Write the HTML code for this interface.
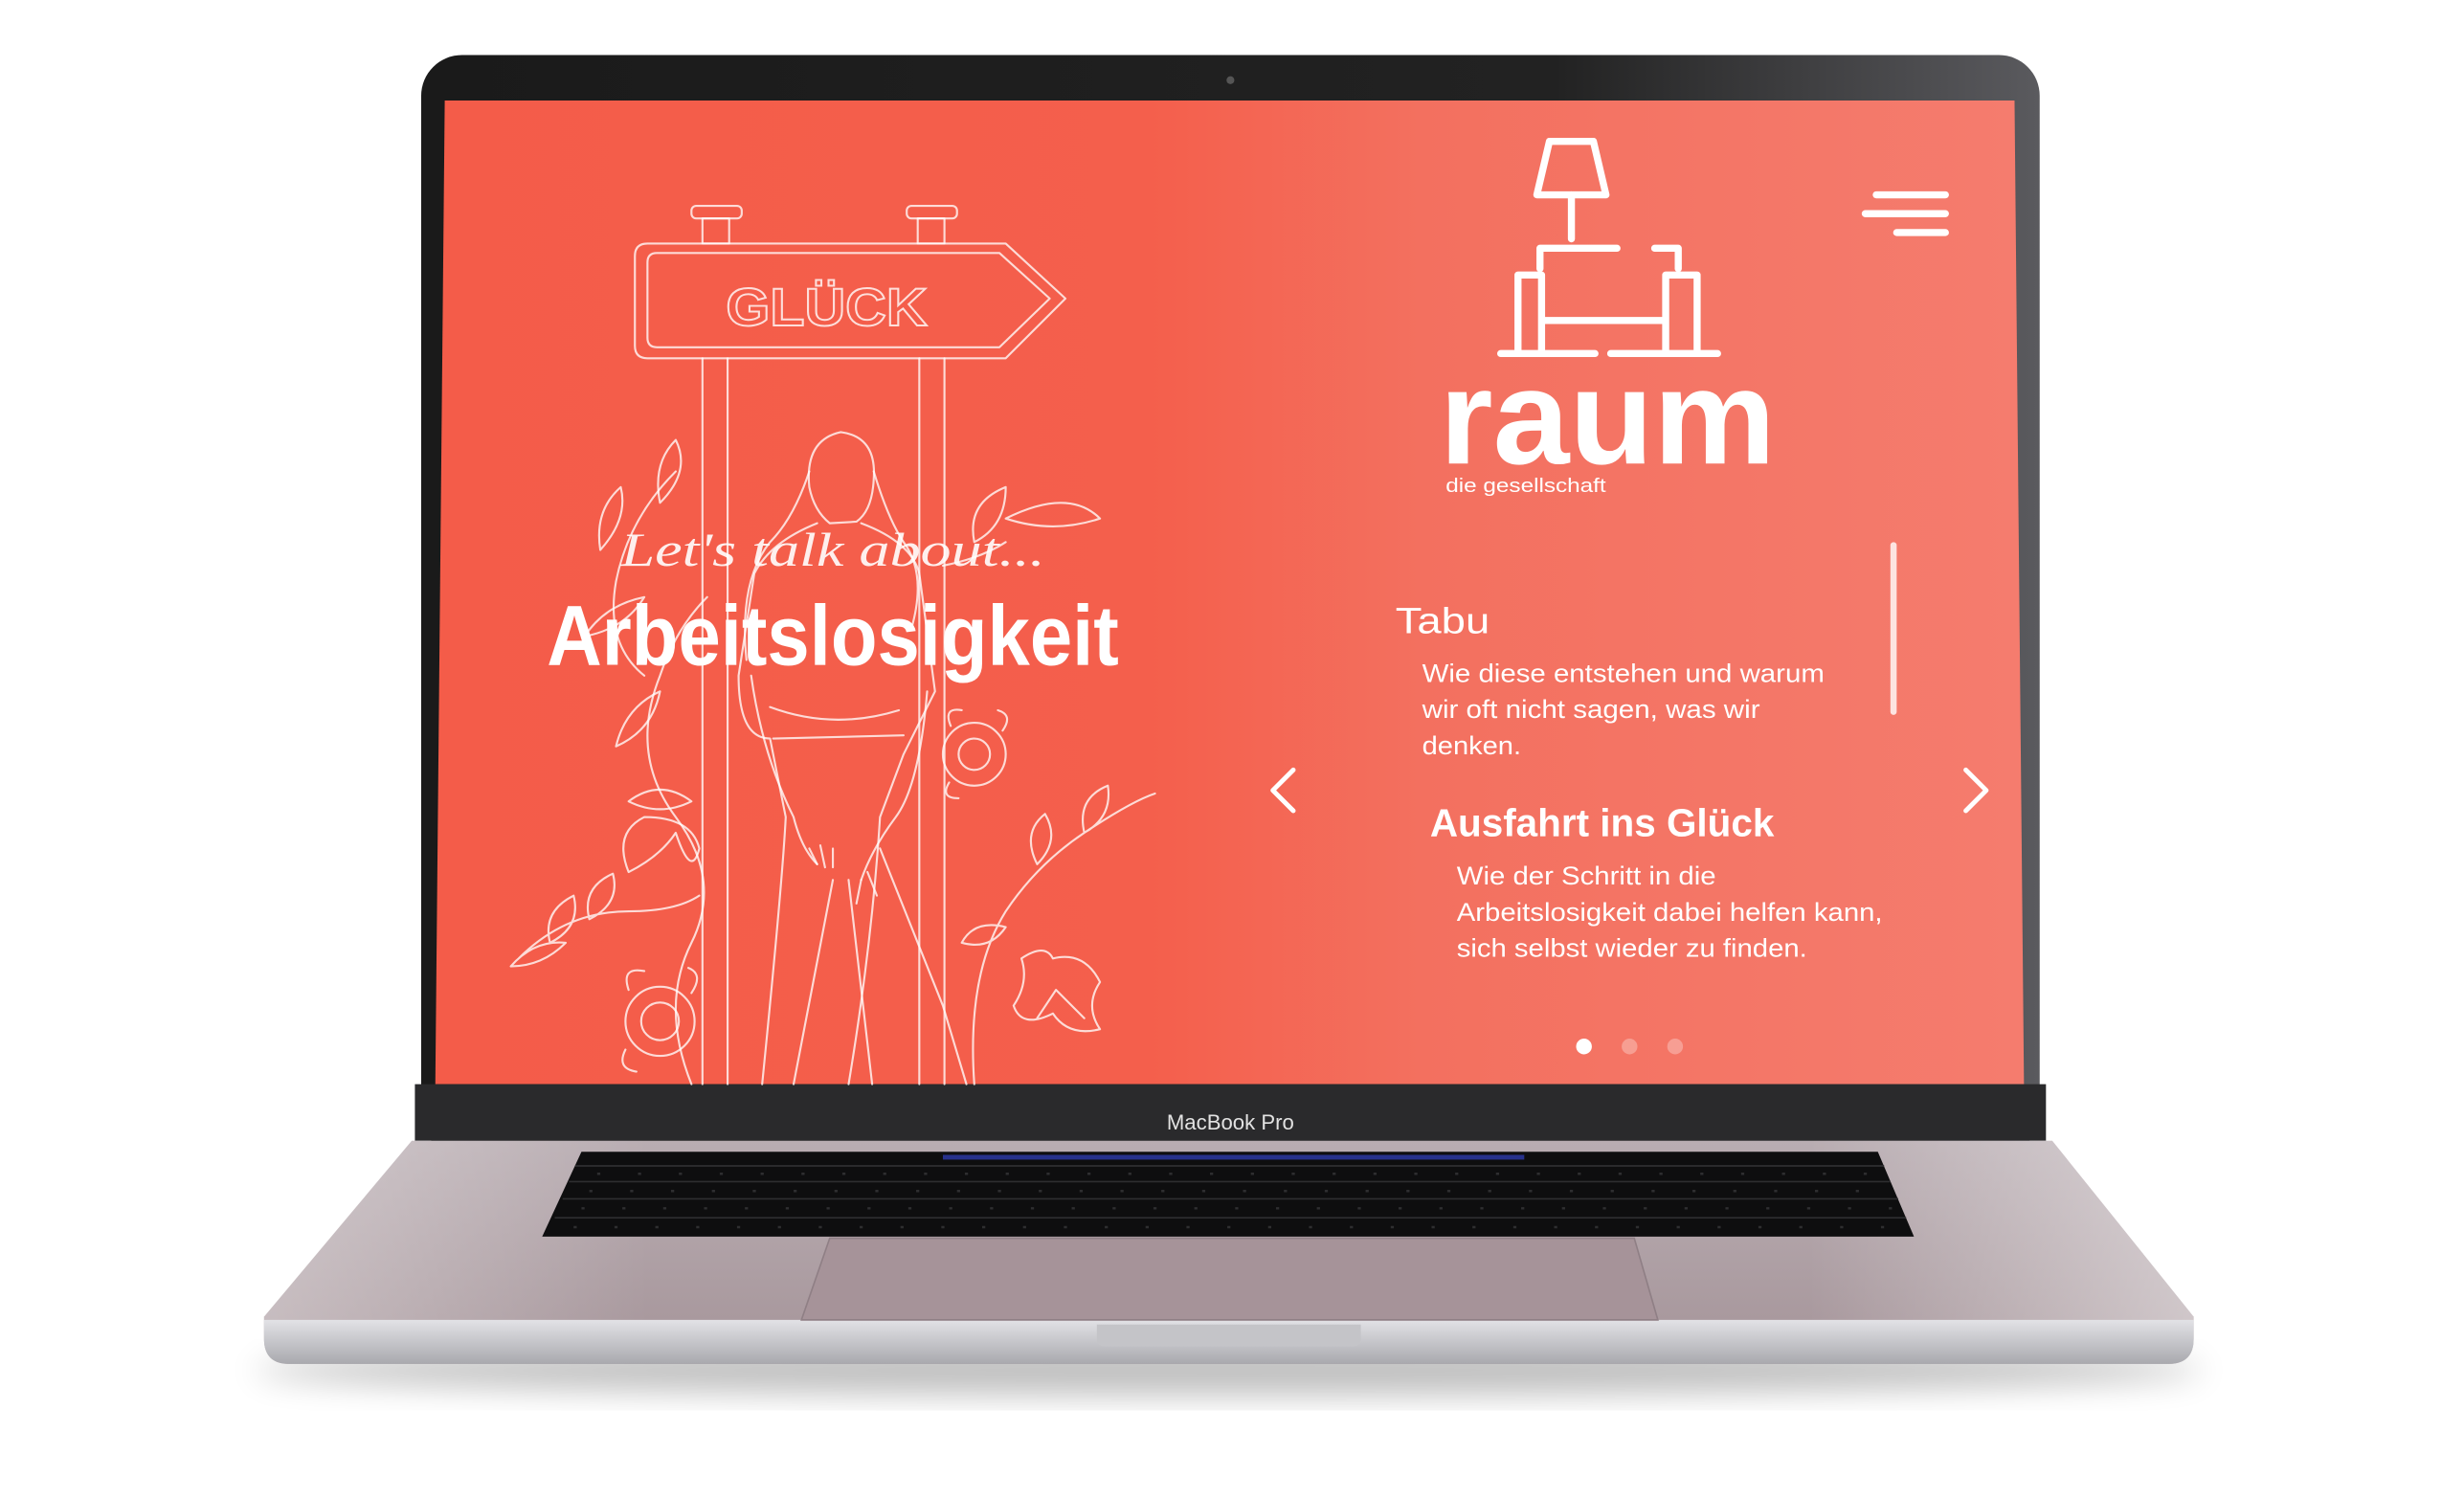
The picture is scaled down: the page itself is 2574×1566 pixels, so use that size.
<!DOCTYPE html>
<html><head><meta charset="utf-8"><style>
html,body{margin:0;padding:0;background:#fff;width:2574px;height:1566px;overflow:hidden}
svg{display:block}
</style></head><body>
<svg width="2574" height="1566" viewBox="0 0 1568 954" xmlns="http://www.w3.org/2000/svg">
<defs>
<linearGradient id="scr" x1="0" x2="1" y1="0" y2="0">
<stop offset="0" stop-color="#f45c49"/><stop offset="0.45" stop-color="#f45f4c"/><stop offset="0.62" stop-color="#f3705f"/><stop offset="1" stop-color="#f57c6e"/>
</linearGradient>
<linearGradient id="lid" x1="0" x2="1"><stop offset="0" stop-color="#1a1a1a"/><stop offset="0.7" stop-color="#222"/><stop offset="1" stop-color="#5a5a5e"/></linearGradient>
<linearGradient id="base" x1="0" y1="0" x2="0" y2="1"><stop offset="0" stop-color="#b9adb2"/><stop offset="1" stop-color="#a59499"/></linearGradient>
<linearGradient id="baseh" x1="0" x2="1"><stop offset="0" stop-color="#fff" stop-opacity=".35"/><stop offset=".2" stop-color="#fff" stop-opacity="0"/><stop offset=".8" stop-color="#fff" stop-opacity="0"/><stop offset="1" stop-color="#fff" stop-opacity=".45"/></linearGradient>
<linearGradient id="lip" x1="0" y1="0" x2="0" y2="1"><stop offset="0" stop-color="#e2e2e6"/><stop offset="1" stop-color="#a9a9ae"/></linearGradient>
<filter id="sh" x="-10%" y="-10%" width="120%" height="140%"><feGaussianBlur stdDeviation="10"/></filter>
</defs>
<!-- shadow -->
<ellipse cx="782" cy="872" rx="620" ry="16" fill="#000" opacity=".25" filter="url(#sh)"/>
<!-- lid -->
<rect x="268" y="35" width="1030" height="700" rx="26" fill="url(#lid)"/>
<circle cx="783" cy="51" r="2.5" fill="#555"/>
<polygon points="283,64 1282,64 1288,690 277,690" fill="url(#scr)"/>
<rect x="264" y="690" width="1038" height="36" fill="#2a2a2c"/>
<text x="783" y="719" text-anchor="middle" font-family="Liberation Sans, sans-serif" font-size="13.5" fill="#e2e2e2">MacBook Pro</text>
<!-- base -->
<path d="M262 726 H1306 L1396 838 V852 Q1396 868 1380 868 H184 Q168 868 168 852 V838 Z" fill="url(#base)"/>
<path d="M262 726 H1306 L1396 838 V852 Q1396 868 1380 868 H184 Q168 868 168 852 V838 Z" fill="url(#baseh)"/>
<path d="M168 840 H1396 V852 Q1396 868 1380 868 H184 Q168 868 168 852 Z" fill="url(#lip)"/>
<path d="M698 843 H866 V852 Q866 857 860 857 H704 Q698 857 698 852 Z" fill="#c4c4c8"/>
<polygon points="370,733 1195,733 1218,787 345,787" fill="#0e0e0f"/>
<g stroke="#2e2e30" stroke-width="1">
<line x1="366" y1="742" x2="1199" y2="742"/><line x1="362" y1="752" x2="1203" y2="752"/><line x1="358" y1="763" x2="1208" y2="763"/><line x1="353" y1="775" x2="1213" y2="775"/>
</g>
<g stroke="#2e2e30" stroke-width="1.5" stroke-dasharray="2 24">
<line x1="380" y1="747" x2="1195" y2="747"/><line x1="375" y1="758" x2="1200" y2="758"/><line x1="370" y1="769" x2="1205" y2="769"/><line x1="365" y1="781" x2="1210" y2="781"/>
</g>
<rect x="600" y="735" width="370" height="3" fill="#3040c0" opacity=".7"/>
<polygon points="528,788 1040,788 1055,840 510,840" fill="#a69399" stroke="#8f7f85" stroke-width="1"/>
<!-- illustration -->
<g fill="none" stroke="#fff" stroke-opacity=".78" stroke-width="1.3" stroke-linejoin="round" stroke-linecap="round">
<rect x="440" y="131" width="32" height="8" rx="3"/><rect x="447" y="139" width="17" height="16"/>
<rect x="577" y="131" width="32" height="8" rx="3"/><rect x="584" y="139" width="17" height="16"/>
<path d="M412 155 H640 L678 190 L640 228 H412 Q404 228 404 220 V163 Q404 155 412 155 Z"/>
<path d="M418 161 H636 L668 190 L636 221 H418 Q412 221 412 215 V167 Q412 161 418 161 Z"/>
<path d="M447 228 V690 M463 228 V690 M585 228 V690 M601 228 V690"/>
<path d="M515 310 Q512 280 535 275 Q558 278 556 305 Q555 325 545 332 L528 333 Q518 325 515 310"/>
<path d="M515 300 Q505 330 490 345 Q470 370 475 420 M556 300 Q565 330 575 345 Q590 365 580 400"/>
<path d="M520 333 Q490 345 480 365 L470 430 Q470 470 490 470 L500 520 Q498 560 485 690 M548 333 Q580 345 585 365 L595 440 L575 480 L560 520 Q555 600 540 690"/>
<path d="M490 450 Q530 465 572 452 M492 470 L575 468"/>
<path d="M478 430 Q485 480 505 520 Q510 540 520 550 M590 440 Q585 500 570 520 Q555 540 548 560"/>
<path d="M520 550 L515 540 M525 552 L522 538 M530 552 L530 540 M548 560 L545 575 M552 555 L558 570"/>
<path d="M540 560 L555 690 M560 540 L600 640 L615 690 M530 560 L505 690"/>
<!-- leaves/flowers left -->
<path d="M440 690 Q420 640 440 600 Q460 560 430 520 Q400 480 420 430 Q430 400 450 380 M430 300 Q400 330 392 370 Q385 410 410 430"/>
<path d="M430 280 Q415 295 420 320 Q440 300 430 280 Z M395 310 Q378 325 382 350 Q400 330 395 310 Z M410 380 Q385 385 372 405 Q398 400 410 380 Z M420 440 Q398 450 392 475 Q415 465 420 440 Z M400 510 Q420 520 440 510 Q420 495 400 510 Z"/>
<path d="M330 610 Q360 580 400 580 Q430 580 445 570 M350 600 Q345 580 365 570 Q370 590 350 600 Z M375 585 Q370 565 390 556 Q395 575 375 585 Z M325 615 Q340 598 360 600 Q345 615 325 615 Z"/>
<circle cx="420" cy="650" r="22"/><circle cx="420" cy="650" r="12"/><path d="M400 630 Q395 615 410 618 M440 632 Q448 620 438 616 M398 668 Q392 680 405 682"/>
<path d="M410 520 Q390 530 400 555 Q420 545 430 530 Q440 560 445 540 Q440 520 410 520 Z"/>
<!-- right -->
<path d="M640 330 Q680 310 700 330 Q670 340 640 330 Z M620 345 Q615 320 640 310 Q640 335 620 345 Z M600 360 Q625 355 640 345"/>
<circle cx="620" cy="480" r="20"/><circle cx="620" cy="480" r="10"/><path d="M605 462 Q600 450 612 452 M638 465 Q645 455 635 452 M604 498 Q598 508 610 508"/>
<path d="M620 690 Q615 620 640 580 Q660 550 690 530 Q720 510 735 505 M660 550 Q650 530 665 518 Q675 535 660 550 Z M690 530 Q685 508 705 500 Q708 520 690 530 Z M640 590 Q620 585 612 600 Q630 605 640 590 Z"/>
<path d="M670 610 Q690 605 700 625 Q690 640 700 655 Q680 660 670 645 Q650 655 645 640 Q655 625 650 610 Q665 600 670 610 Z M672 630 L690 648 M672 630 L660 648"/>
</g>
<text x="462" y="207" font-family="Liberation Sans, sans-serif" font-weight="bold" font-size="34" textLength="128" lengthAdjust="spacingAndGlyphs" fill="none" stroke="#fff" stroke-opacity=".8" stroke-width="1.2">GLÜCK</text>
<text x="395" y="360" font-family="Liberation Serif, serif" font-style="italic" font-size="30" textLength="270" lengthAdjust="spacingAndGlyphs" fill="#fff" fill-opacity=".9">Let's talk about...</text>
<text x="348" y="423" font-family="Liberation Sans, sans-serif" font-weight="bold" font-size="54" textLength="364" lengthAdjust="spacingAndGlyphs" fill="#fff">Arbeitslosigkeit</text>
<!-- logo -->
<g fill="none" stroke="#fff" stroke-width="4.5" stroke-linejoin="round" stroke-linecap="round">
<path d="M986 90 H1014 L1022 124 H978 Z"/>
<path d="M1000 124 V152 M980 171 V158 H1029 M1053 158 H1068 V171"/>
<path d="M966 225 V175 H981 V225 M1060 225 V175 H1080 V225 M981 204 H1060 M955 225 H1015 M1025 225 H1093"/>
</g>
<text x="916" y="295" font-family="Liberation Sans, sans-serif" font-weight="bold" font-size="86" textLength="214" lengthAdjust="spacingAndGlyphs" fill="#fff">raum</text>
<text x="920" y="313" font-family="Liberation Sans, sans-serif" font-size="12.5" textLength="102" lengthAdjust="spacingAndGlyphs" fill="#fff">die gesellschaft</text>
<!-- hamburger -->
<g stroke="#fff" stroke-width="4.5" stroke-linecap="round">
<line x1="1194" y1="124" x2="1238" y2="124"/><line x1="1187" y1="136" x2="1238" y2="136"/><line x1="1207" y1="148" x2="1238" y2="148"/>
</g>
<rect x="1203" y="345" width="4" height="110" rx="2" fill="#fff" opacity=".8"/>
<!-- text -->
<g font-family="Liberation Sans, sans-serif" fill="#fff">
<text x="888" y="403" font-size="23" textLength="60" lengthAdjust="spacingAndGlyphs">Tabu</text>
<text x="905" y="434" font-size="16.5" textLength="256" lengthAdjust="spacingAndGlyphs">Wie diese entstehen und warum</text>
<text x="905" y="457" font-size="16.5" textLength="215" lengthAdjust="spacingAndGlyphs">wir oft nicht sagen, was wir</text>
<text x="905" y="480" font-size="16.5" textLength="63" lengthAdjust="spacingAndGlyphs">denken.</text>
<text x="910" y="532" font-size="25" font-weight="bold" textLength="219" lengthAdjust="spacingAndGlyphs">Ausfahrt ins Glück</text>
<text x="927" y="563" font-size="16.5" textLength="165" lengthAdjust="spacingAndGlyphs">Wie der Schritt in die</text>
<text x="927" y="586" font-size="16.5" textLength="271" lengthAdjust="spacingAndGlyphs">Arbeitslosigkeit dabei helfen kann,</text>
<text x="927" y="609" font-size="16.5" textLength="223" lengthAdjust="spacingAndGlyphs">sich selbst wieder zu finden.</text>
</g>
<g fill="none" stroke="#fff" stroke-width="3" stroke-linecap="round" stroke-linejoin="round">
<path d="M823 490 L810 503 L823 516"/><path d="M1251 490 L1264 503 L1251 516"/>
</g>
<circle cx="1008" cy="666" r="5" fill="#fff"/>
<circle cx="1037" cy="666" r="5" fill="#fff" opacity=".3"/>
<circle cx="1066" cy="666" r="5" fill="#fff" opacity=".3"/>
</svg>
</body></html>
